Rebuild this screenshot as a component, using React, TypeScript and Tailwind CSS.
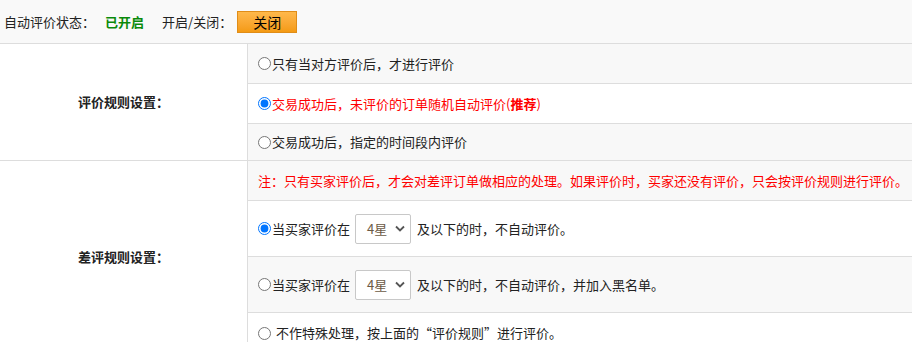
import { useState } from 'react';

const FONT = { fontFamily: '"Microsoft YaHei", "Noto Sans CJK SC", "Liberation Sans", sans-serif' };

function StarSelect() {
  return (
    <span className="relative inline-flex items-center w-[56px] h-[30px] border border-[#c8c8c8] bg-white rounded-[2px]">
      <span className="pl-[11px] text-[13px] text-[#6b5a45]">4星</span>
      <svg className="absolute right-[5px] top-[10px] w-[10px] h-[8px]" viewBox="0 0 10 8">
        <path d="M1 1.5 L5 5.5 L9 1.5" fill="none" stroke="#555" strokeWidth="1.8" />
      </svg>
    </span>
  );
}

export default function App() {
  const [rule, setRule] = useState('random');
  const [bad, setBad] = useState('noauto');

  return (
    <div className="w-[912px] text-[13px] text-[#222] bg-white" style={FONT}>
      {/* Status bar */}
      <div className="h-[44px] flex items-center bg-[#f9f9f9] border-b border-[#dddddd] pl-[4px]">
        <span>自动评价状态：</span>
        <span className="ml-[10px] font-bold text-[#0a8a0a]">已开启</span>
        <span className="ml-[18px]">开启/关闭：</span>
        <button className="ml-[5px] w-[60px] h-[22px] border border-[#e08d18] bg-gradient-to-b from-[#ffb84a] to-[#f49a12] text-black text-[14px] leading-none">
          关闭
        </button>
      </div>

      {/* Rule settings */}
      <div className="flex border-b border-[#dddddd]">
        <div className="w-[248px] shrink-0 flex items-center justify-center font-bold border-r border-[#dddddd]">
          评价规则设置：
        </div>
        <div className="flex-1">
          <label className="h-[40px] flex items-center pl-[10px] bg-[#f8f8f8] border-b border-[#dddddd]">
            <input type="radio" name="rule" checked={rule === 'after'} onChange={() => setRule('after')} className="w-[13px] h-[13px] mr-[1px]" />
            只有当对方评价后，才进行评价
          </label>
          <label className="h-[40px] flex items-center pl-[10px] bg-white border-b border-[#dddddd] text-[#ff0000]">
            <input type="radio" name="rule" checked={rule === 'random'} onChange={() => setRule('random')} className="w-[13px] h-[13px] mr-[1px]" />
            交易成功后，未评价的订单随机自动评价(<b>推荐</b>)
          </label>
          <label className="h-[36px] flex items-center pl-[10px] bg-[#f8f8f8]">
            <input type="radio" name="rule" checked={rule === 'period'} onChange={() => setRule('period')} className="w-[13px] h-[13px] mr-[1px]" />
            交易成功后，指定的时间段内评价
          </label>
        </div>
      </div>

      {/* Bad review settings */}
      <div className="flex">
        <div className="w-[248px] shrink-0 flex items-center justify-center font-bold border-r border-[#dddddd]">
          差评规则设置：
        </div>
        <div className="flex-1">
          <div className="h-[40px] flex items-center pl-[10px] bg-[#f8f8f8] border-b border-[#dddddd] text-[#ff0000]">
            注：只有买家评价后，才会对差评订单做相应的处理。如果评价时，买家还没有评价，只会按评价规则进行评价。
          </div>
          <label className="h-[56px] flex items-center pl-[10px] bg-white border-b border-[#dddddd]">
            <input type="radio" name="bad" checked={bad === 'noauto'} onChange={() => setBad('noauto')} className="w-[13px] h-[13px] mr-[1px]" />
            当买家评价在
            <span className="ml-[5px] mr-[6px]"><StarSelect /></span>
            及以下的时，不自动评价。
          </label>
          <label className="h-[56px] flex items-center pl-[10px] bg-[#f8f8f8] border-b border-[#dddddd]">
            <input type="radio" name="bad" checked={bad === 'black'} onChange={() => setBad('black')} className="w-[13px] h-[13px] mr-[1px]" />
            当买家评价在
            <span className="ml-[5px] mr-[6px]"><StarSelect /></span>
            及以下的时，不自动评价，并加入黑名单。
          </label>
          <label className="h-[40px] flex items-center pl-[10px] bg-white">
            <input type="radio" name="bad" checked={bad === 'none'} onChange={() => setBad('none')} className="w-[13px] h-[13px] mr-[5px]" />
            不作特殊处理，按上面的“评价规则”进行评价。
          </label>
        </div>
      </div>
    </div>
  );
}
